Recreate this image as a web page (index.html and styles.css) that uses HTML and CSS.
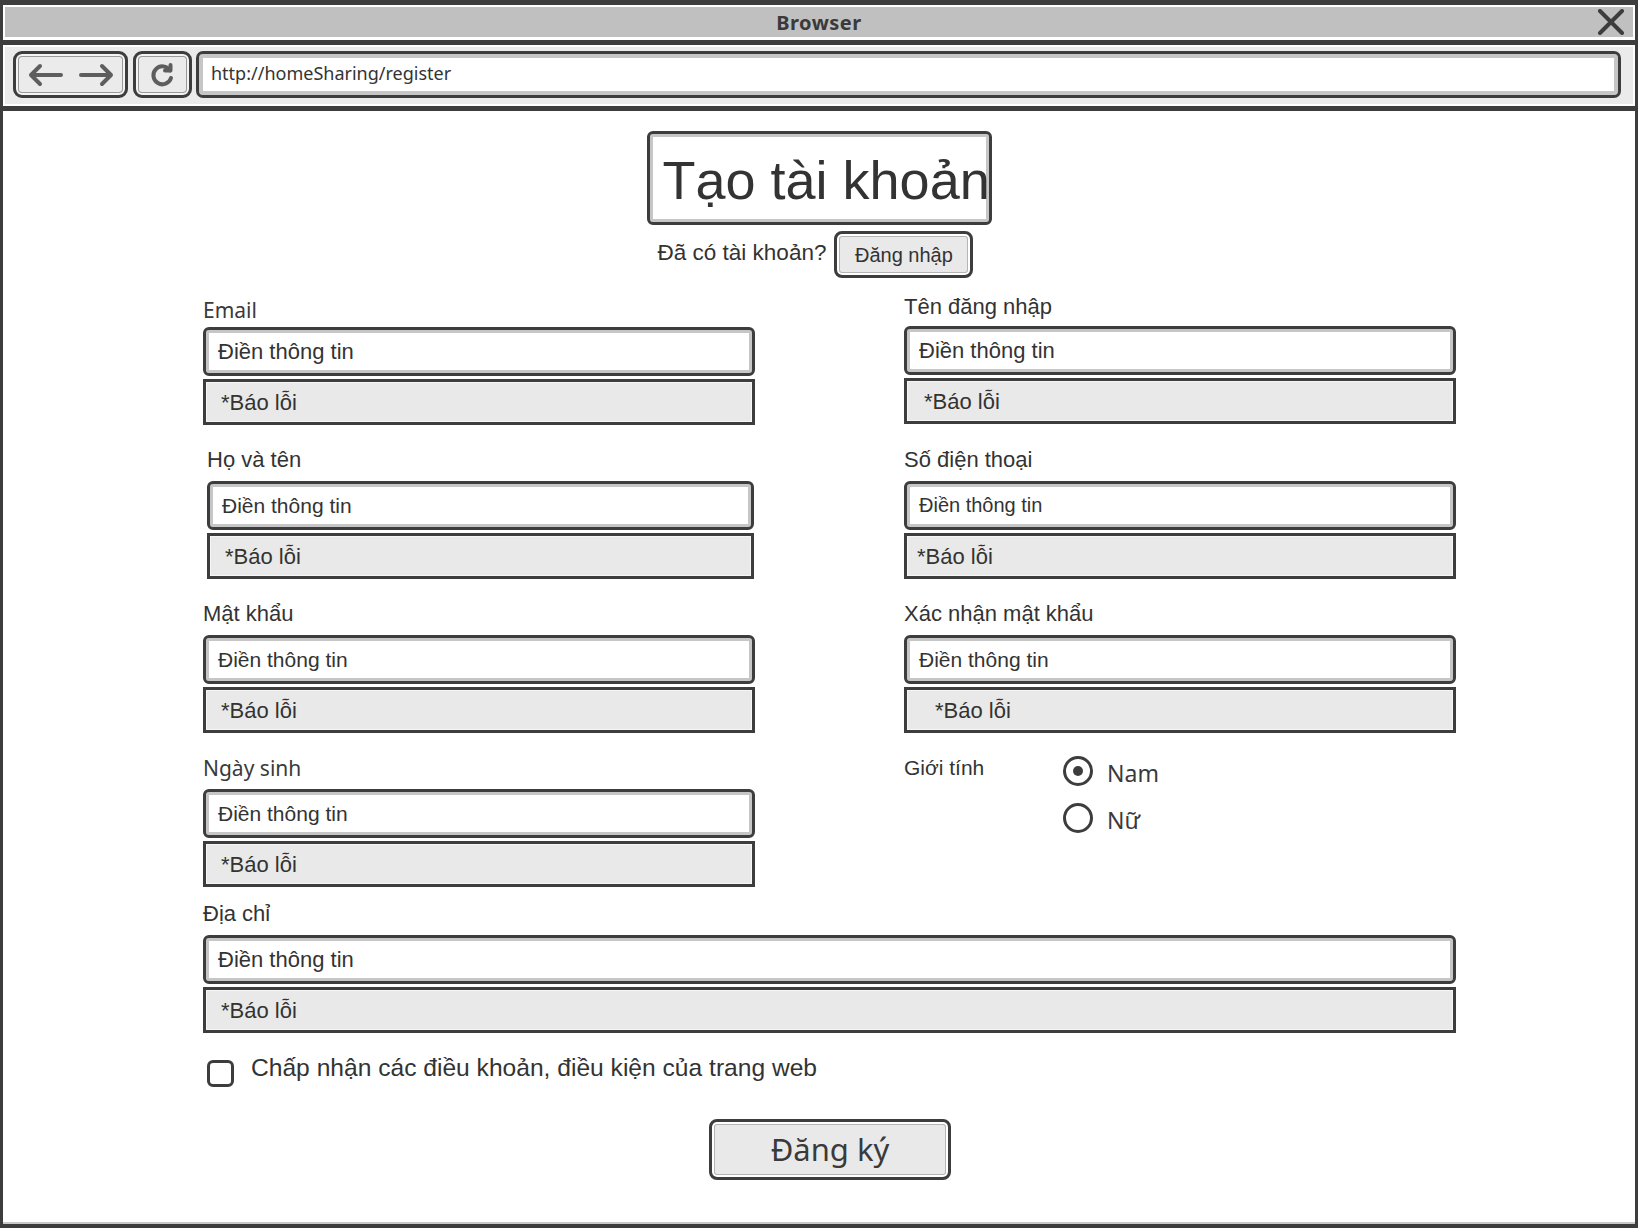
FILE: index.html
```html
<!DOCTYPE html>
<html lang="vi">
<head>
<meta charset="utf-8">
<title>Browser</title>
<link rel="stylesheet" href="styles.css">
</head>
<body>
<div class="window">
  <div class="titlebar">
    <span class="title">Browser</span>
    <svg class="close" width="28" height="26" viewBox="0 0 28 26"><path d="M3 2 L25 24 M25 2 L3 24" stroke="#3d3d3d" stroke-width="4" stroke-linecap="round"/></svg>
  </div>
  <div class="toolbar">
    <div class="navbtn nav-arrows">
      <svg width="86" height="24" viewBox="0 0 86 24"><g fill="none" stroke="#5e5e5e" stroke-width="4" stroke-linecap="round" stroke-linejoin="round"><path d="M3 12 H33 M12 3 L3 12 L12 21"/><path d="M53 12 H83 M74 3 L83 12 L74 21"/></g></svg>
    </div>
    <div class="navbtn nav-refresh">
      <svg width="26" height="26" viewBox="0 0 26 26"><g fill="none" stroke="#5e5e5e" stroke-width="4" stroke-linecap="round" stroke-linejoin="round"><path d="M20 8.5 A 9 9 0 1 0 21 16"/><path d="M20.5 3 V 8.5 H 15"/></g></svg>
    </div>
    <div class="urlbar">http://homeSharing/register</div>
  </div>
  <div class="content">
    <div class="heading-box"><h1 class="heading">Tạo tài khoản</h1></div>
    <div class="login-row">
      <span class="login-text">Đã có tài khoản?</span>
      <button class="btn btn-login">Đăng nhập</button>
    </div>
    <div class="form">
      <div class="form-grid">
        <div class="field">
          <div class="field-label comic first">Email</div>
          <div class="input f22">Điền thông tin</div>
          <div class="error">*Báo lỗi</div>
        </div>
        <div class="field">
          <div class="field-label first up">Tên đăng nhập</div>
          <div class="input f22">Điền thông tin</div>
          <div class="error pad-l">*Báo lỗi</div>
        </div>
        <div class="field narrow">
          <div class="field-label">Họ và tên</div>
          <div class="input f21">Điền thông tin</div>
          <div class="error">*Báo lỗi</div>
        </div>
        <div class="field">
          <div class="field-label">Số điện thoại</div>
          <div class="input f20">Điền thông tin</div>
          <div class="error pad-s">*Báo lỗi</div>
        </div>
        <div class="field">
          <div class="field-label">Mật khẩu</div>
          <div class="input f21">Điền thông tin</div>
          <div class="error">*Báo lỗi</div>
        </div>
        <div class="field">
          <div class="field-label">Xác nhận mật khẩu</div>
          <div class="input f21">Điền thông tin</div>
          <div class="error pad-xl">*Báo lỗi</div>
        </div>
        <div class="field">
          <div class="field-label comic">Ngày sinh</div>
          <div class="input f21">Điền thông tin</div>
          <div class="error">*Báo lỗi</div>
        </div>
        <div class="gender">
          <div class="gender-label">Giới tính</div>
          <div class="radios">
            <div class="radio-item"><span class="radio checked"></span><span class="radio-text">Nam</span></div>
            <div class="radio-item"><span class="radio"></span><span class="radio-text">Nữ</span></div>
          </div>
        </div>
      </div>
      <div class="field address">
        <div class="field-label">Địa chỉ</div>
        <div class="input f22">Điền thông tin</div>
        <div class="error">*Báo lỗi</div>
      </div>
      <div class="terms">
        <span class="checkbox"></span>
        <span class="terms-text">Chấp nhận các điều khoản, điều kiện của trang web</span>
      </div>
    </div>
    <button class="btn btn-submit">Đăng ký</button>
  </div>
</div>
</body>
</html>
```

FILE: styles.css
```css
html, body {
  margin: 0;
  padding: 0;
  background: #fff;
}

body {
  font-family: "Liberation Sans", Arial, sans-serif;
  color: #333;
}

.window {
  width: 1638px;
  height: 1228px;
  box-sizing: border-box;
  border: 3px solid #3d3d3d;
  border-top-width: 5px;
  border-bottom-width: 4px;
  display: flex;
  flex-direction: column;
  background: #fff;
}

.titlebar {
  height: 35px;
  box-sizing: border-box;
  border: 2px solid #fff;
  border-bottom-width: 3px;
  background: #c0c0c0;
  display: flex;
  align-items: center;
  justify-content: center;
  position: relative;
}

.title {
  font-family: "Noto Sans", sans-serif;
  font-weight: bold;
  font-size: 20px;
  color: #3a3a3a;
  letter-spacing: 0.5px;
}

.close {
  position: absolute;
  right: 8px;
  top: 2px;
}

.toolbar {
  height: 71px;
  box-sizing: border-box;
  border-top: 5px solid #3d3d3d;
  border-bottom: 5px solid #3d3d3d;
  background: #ebebeb;
  box-shadow: inset 0 0 0 2px #fff;
  display: flex;
  align-items: flex-start;
  padding: 6px 14px 0 10px;
  gap: 5px;
}

.navbtn {
  height: 47px;
  box-sizing: border-box;
  border: 3px solid #3d3d3d;
  border-radius: 9px;
  background: #ebebeb;
  box-shadow: inset 0 0 0 2px #f4f4f4, inset 0 0 0 3px #9a9a9a;
  display: flex;
  align-items: center;
  justify-content: center;
}

.nav-arrows {
  width: 115px;
}

.nav-refresh {
  width: 59px;
}

.urlbar {
  flex: 1;
  height: 47px;
  box-sizing: border-box;
  border: 3px solid #3d3d3d;
  border-radius: 7px;
  background: #fff;
  box-shadow: inset 0 0 0 4px #c6c6c6;
  font-family: "Noto Sans", sans-serif;
  font-size: 18px;
  color: #333;
  display: flex;
  align-items: center;
  padding-left: 12px;
  padding-bottom: 3px;
  margin-left: -1px;
}

.content {
  flex: 1;
  display: flex;
  flex-direction: column;
  align-items: center;
  box-shadow: inset 0 -2px 0 #c8c8c8;
}

.heading-box {
  margin-top: 20px;
  width: 345px;
  height: 94px;
  box-sizing: border-box;
  border: 3px solid #3d3d3d;
  border-radius: 6px;
  box-shadow: inset 0 0 0 3px #c6c6c6;
  display: flex;
  align-items: center;
  padding-left: 13px;
}

.heading {
  margin: 0;
  font-weight: normal;
  font-size: 54px;
  line-height: 1;
  white-space: nowrap;
  color: #333;
  padding-top: 4px;
}

.login-row {
  margin-top: 6px;
  display: flex;
  align-items: center;
  gap: 8px;
  margin-left: -7px;
}

.login-text {
  font-size: 22.5px;
  padding-bottom: 3px;
}

.btn {
  font-family: "Liberation Sans", Arial, sans-serif;
  color: #333;
  background: #e9e9e9;
  border: 3px solid #3d3d3d;
  border-radius: 8px;
  box-shadow: inset 0 0 0 2px #fff, inset 0 0 0 3px #b5b5b5;
  padding: 0;
  cursor: pointer;
}

.btn-login {
  width: 139px;
  height: 47px;
  font-size: 20px;
  padding-top: 2px;
}

.form {
  align-self: stretch;
  margin-left: 200px;
  width: 1253px;
  margin-top: 19px;
}

.form-grid {
  display: grid;
  grid-template-columns: 552px 552px;
  column-gap: 149px;
  row-gap: 22px;
}

.field {
  display: flex;
  flex-direction: column;
}

.field.narrow {
  padding-left: 4px;
  width: 547px;
}

.field-label {
  height: 26px;
  line-height: 26px;
  font-size: 22px;
  margin-bottom: 8px;
}

.field-label.first {
  margin-bottom: 4px;
}

.field-label.up {
  margin-top: -3px;
  margin-bottom: 6px;
}

.comic {
  font-family: "Noto Sans", sans-serif;
  font-size: 21px;
  color: #3a3a3a;
}

.input {
  height: 49px;
  box-sizing: border-box;
  border: 3px solid #3d3d3d;
  border-radius: 6px;
  background: #fff;
  box-shadow: inset 0 0 0 3px #c6c6c6;
  display: flex;
  align-items: center;
  padding-left: 12px;
  color: #333;
}

.f22 { font-size: 22px; }
.f21 { font-size: 21px; }
.f20 { font-size: 20px; }

.error {
  margin-top: 3px;
  height: 46px;
  box-sizing: border-box;
  border: 3px solid #3d3d3d;
  background: #e9e9e9;
  box-shadow: inset 0 0 0 1px #f6f6f6;
  display: flex;
  align-items: center;
  padding-left: 15px;
  padding-top: 2px;
  font-size: 22px;
  color: #333;
}

.error.pad-l { padding-left: 17px; }
.error.pad-s { padding-left: 10px; }
.error.pad-xl { padding-left: 28px; }

.gender {
  display: grid;
  grid-template-columns: 159px 1fr;
}

.gender-label {
  font-size: 21px;
  line-height: 26px;
  height: 26px;
}

.radios {
  display: flex;
  flex-direction: column;
  gap: 17px;
  padding-top: 1px;
}

.radio-item {
  display: flex;
  align-items: center;
  gap: 14px;
  height: 30px;
}

.radio {
  width: 30px;
  height: 30px;
  box-sizing: border-box;
  border: 3px solid #3d3d3d;
  border-radius: 50%;
  display: flex;
  align-items: center;
  justify-content: center;
}

.radio.checked::after {
  content: "";
  width: 10px;
  height: 10px;
  border-radius: 50%;
  background: #3d3d3d;
}

.radio-text {
  font-family: "Noto Sans", sans-serif;
  font-size: 23px;
  color: #3a3a3a;
  padding-top: 3px;
}

.address {
  margin-top: 14px;
  width: 1253px;
}

.terms {
  margin-top: 21px;
  display: flex;
  align-items: flex-start;
  gap: 17px;
  padding-left: 4px;
}

.checkbox {
  margin-top: 6px;
  width: 27px;
  height: 27px;
  box-sizing: border-box;
  border: 3px solid #3d3d3d;
  border-radius: 6px;
  flex: none;
}

.terms-text {
  font-size: 24.6px;
  line-height: 28px;
}

.btn-submit {
  margin-top: 32px;
  margin-left: 22px;
  width: 242px;
  height: 61px;
  font-family: "Noto Sans", sans-serif;
  font-size: 31px;
  color: #3a3a3a;
  padding-bottom: 2px;
}
```
